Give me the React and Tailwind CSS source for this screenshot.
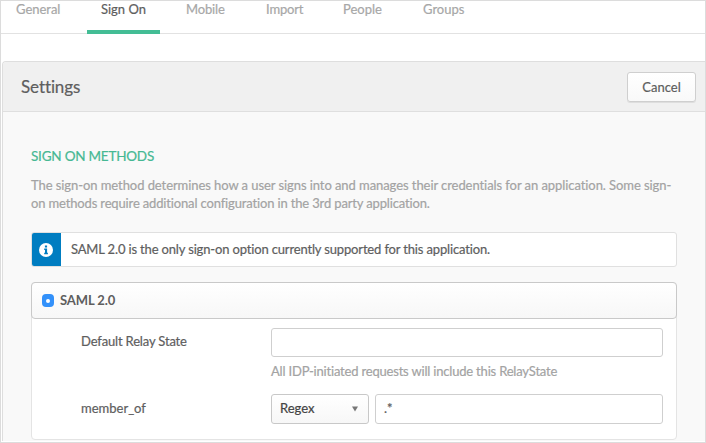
import React from "react";

const tabs = [
  { name: "General", box: "w-[86px] pl-[15px]", text: "tracking-[-0.02px]" },
  { name: "Sign On", box: "w-[73px] pl-[14px]", text: "tracking-[0px]", active: true },
  { name: "Mobile", box: "w-[105px] pl-[26px]", text: "tracking-[-0.15px]" },
  { name: "Import", box: "w-[77px] pl-px", text: "tracking-[-0.15px]" },
  { name: "People", box: "w-[81px] pl-px", text: "tracking-[0px]" },
  { name: "Groups", box: "w-[81px] pl-0", text: "tracking-[0px]" },
];

function Tabs() {
  return (
    <nav className="flex h-[33px] border-b border-[#e2e2e2]">
      {tabs.map((t) => (
        <div
          key={t.name}
          className={`h-[33px] shrink-0 whitespace-nowrap text-[13px] leading-[16px] ${t.box} ${
            t.active ? "border-b-4 border-[#43bd95] text-[#5e5e5e]" : "text-[#a7a7a7]"
          }`}
        >
          <span className={t.text}>{t.name}</span>
        </div>
      ))}
    </nav>
  );
}

function InfoIcon() {
  return (
    <svg width="14" height="14" viewBox="0 0 14 14">
      <circle cx="7" cy="7" r="7" fill="#fff" />
      <path d="M5.9 2.6h2.2v1.9H5.9zM5.2 5.6h2.9v4.2h.8v1.4H5.2V9.8H6V7h-.8z" fill="#007dc1" />
    </svg>
  );
}

export default function App() {
  return (
    <div className="h-[443px] w-[706px] overflow-hidden border border-[#dcdcdc] bg-white font-['Lato',sans-serif] text-[13px] text-[#5e5e5e] [-webkit-text-stroke:0.2px] [font-variant-ligatures:none]">
      <Tabs />
      <section className="ml-px mt-[27px] h-[380px] rounded-tl-[4px] border-l border-t border-[#dedede] bg-[#f9f9f9]">
        <header className="flex h-[50px] items-center justify-between rounded-tl-[3px] border-b border-[#dfdfdf] bg-[#f0f0f0] pl-[18px] pr-[9px]">
          <h1 className="text-[17px] leading-[22px] tracking-[-0.1px]">Settings</h1>
          <button className="mt-px flex h-[30px] w-[69px] items-center justify-center rounded-[3px] border border-[#cfcfcf] bg-linear-to-b from-white to-[#f9f9f9] pt-px shadow-[0_1px_0_#dedede]">
            Cancel
          </button>
        </header>
        <div className="px-[28px] pt-[35px]">
          <h2 className="text-[13.5px] leading-[18px] tracking-[-0.22px] text-[#46b893]">SIGN ON METHODS</h2>
          <p className="mt-[11px] whitespace-nowrap leading-[18px] text-[#a3a3a3]">
            <span className="tracking-[-0.07px]">The sign-on method determines how a user signs into and manages their credentials for an application. Some sign-</span>
            <br />
            <span className="tracking-[-0.15px]">on methods require additional configuration in the 3rd party application.</span>
          </p>
          <div className="mt-[20px] flex h-[35px] w-[646px] overflow-hidden rounded-[3px] border border-[#e0e0e0] bg-white">
            <div className="-my-px -ml-px flex w-[30px] shrink-0 items-center justify-center bg-[#007dc1]">
              <InfoIcon />
            </div>
            <div className="pl-[10px] leading-[33px] tracking-[-0.155px]">
              SAML 2.0 is the only sign-on option currently supported for this application.
            </div>
          </div>
          <div className="mt-[15px] h-[158px] w-[646px] rounded-[4px] border border-[#e4e4e4] bg-white">
            <div className="-mx-px -mt-px flex h-[37px] items-center rounded-[4px] border border-[#c9c9c9] bg-linear-to-b from-white to-[#f7f7f7] pl-[10px]">
              <div className="flex h-[13px] w-[12px] items-center justify-center rounded-[4px] bg-[#3391fa]">
                <div className="h-1 w-1 rounded-full bg-white" />
              </div>
              <span className="ml-[6px] font-bold tracking-[-0.1px] [-webkit-text-stroke:0px]">SAML 2.0</span>
            </div>
            <div className="flex pl-[49px] pt-[9px]">
              <label className="w-[190px] pt-[4px] leading-[18px] tracking-[-0.16px]">Default Relay State</label>
              <div>
                <div className="h-[29px] w-[392px] rounded-[3px] border border-[#cfcfcf] bg-white" />
                <p className="mt-[5px] whitespace-nowrap leading-[18px] tracking-[-0.19px] text-[#a3a3a3]">
                  All IDP-initiated requests will include this RelayState
                </p>
              </div>
            </div>
            <div className="flex pl-[49px] pt-[14px]">
              <label className="w-[190px] pt-[5px] leading-[18px]">member_of</label>
              <div className="flex gap-[6px]">
                <div className="flex h-[30px] w-[98px] items-center justify-between rounded-[3px] border border-[#c8c8c8] bg-linear-to-b from-white to-[#f7f7f7] pl-[8px] pr-[10px] text-[#444]">
                  <span>Regex</span>
                  <svg width="6" height="6" viewBox="0 0 6 6"><path d="M0 0.5h6L3 5.5z" fill="#777" /></svg>
                </div>
                <div className="flex h-[30px] w-[288px] items-center rounded-[3px] border border-[#cfcfcf] bg-white pl-[8px]">
                  .*
                </div>
              </div>
            </div>
          </div>
        </div>
      </section>
    </div>
  );
}
